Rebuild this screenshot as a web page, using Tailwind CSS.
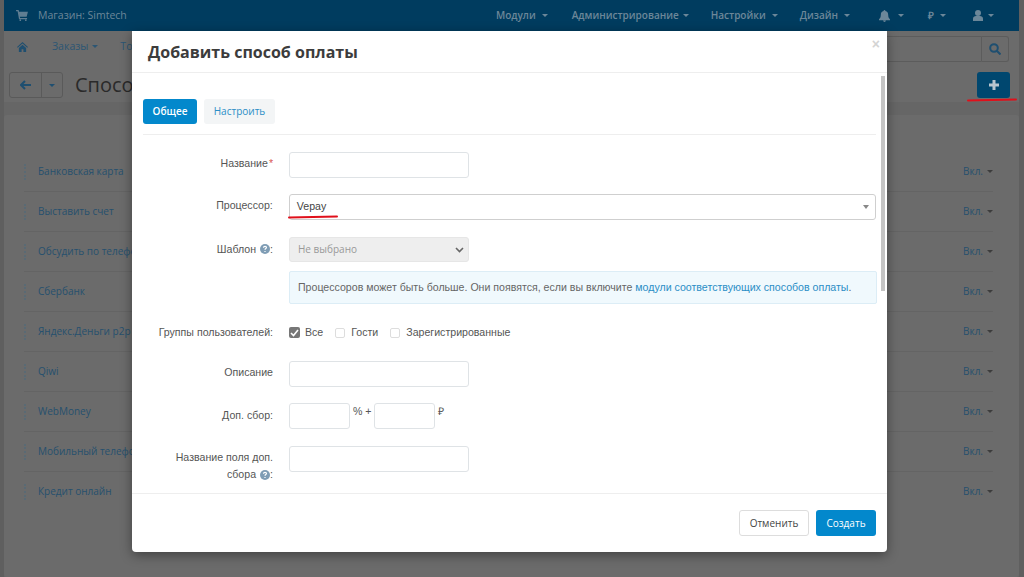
<!DOCTYPE html>
<html lang="ru">
<head>
<meta charset="utf-8">
<script src="https://cdn.jsdelivr.net/npm/@tailwindcss/browser@4"></script>
<title>Способы оплаты</title>
</head>
<body class="relative w-[1024px] h-[577px] overflow-hidden bg-[#5f5f5f] font-['Open_Sans',sans-serif] text-[11px]">
<div class="flex flex-col h-full ml-[4px] mr-[5px] bg-[#666666]">
  <header class="h-[31px] bg-[#003c5f] flex items-center pl-[12px] text-[#6c8799]">
    <svg class="w-[12px] h-[11px] mr-[10px]" viewBox="0 0 14 13" fill="#5f7d92"><path d="M0 0h3l.5 2H14l-1.500 6H4.500l.3 1.500H13V11H3.500L1.800 1.500H0z"/><circle cx="5" cy="12" r="1"/><circle cx="11.500" cy="12" r="1"/></svg>
    <span class="text-[10.500px]">Магазин: Simtech</span>
    <nav class="ml-auto flex items-center font-semibold text-[10px] text-[#6c8799]">
      <span class="flex items-center gap-[6px] mr-[24px]">Модули<i class="w-0 h-0 border-x-[3px] border-x-transparent border-t-[3px] border-t-[#6c8799]"></i></span>
      <span class="flex items-center gap-[4px] mr-[22px]">Администрирование<i class="w-0 h-0 border-x-[3px] border-x-transparent border-t-[3px] border-t-[#6c8799]"></i></span>
      <span class="flex items-center gap-[6px] mr-[22px]">Настройки<i class="w-0 h-0 border-x-[3px] border-x-transparent border-t-[3px] border-t-[#6c8799]"></i></span>
      <span class="flex items-center gap-[6px] mr-[29px]">Дизайн<i class="w-0 h-0 border-x-[3px] border-x-transparent border-t-[3px] border-t-[#6c8799]"></i></span>
      <span class="flex items-center gap-[8px] mr-[24px]"><svg class="w-[11px] h-[12px]" viewBox="0 0 12 13" fill="#6c8799"><path d="M6 0c.6 0 1 .4 1 1 2 .4 3 2 3 4 0 3 1 4 2 5v1H0v-1c1-1 2-2 2-5 0-2 1-3.600 3-4 0-.6.400-1 1-1zM4.500 11.500h3C7.500 12.500 6.800 13 6 13s-1.500-.5-1.500-1.500z"/></svg><i class="w-0 h-0 border-x-[3px] border-x-transparent border-t-[3px] border-t-[#6c8799]"></i></span>
      <span class="flex items-center gap-[6px] mr-[27px]">₽<i class="w-0 h-0 border-x-[3px] border-x-transparent border-t-[3px] border-t-[#6c8799]"></i></span>
      <span class="flex items-center gap-[5px] mr-[25px]"><svg class="w-[10px] h-[11px]" viewBox="0 0 10 11" fill="#6c8799"><circle cx="5" cy="3" r="3"/><path d="M0 11V8.500C0 7 1.500 6 3 6h4c1.500 0 3 1 3 2.500V11z"/></svg><i class="w-0 h-0 border-x-[3px] border-x-transparent border-t-[3px] border-t-[#6c8799]"></i></span>
    </nav>
  </header>
  <div class="h-[31px] flex items-center pl-[13px] pr-[10px] bg-[#6b6b6b] text-[#2c5674] text-[10.500px]">
    <svg class="w-[11px] h-[10px] mr-[24px]" viewBox="0 0 12 11" fill="#1f4f70"><path d="M6 0l6 5.500-.8.800L6 1.700.8 6.300 0 5.500zM2 6.500L6 3l4 3.500V11H7V8H5v3H2z"/></svg>
    <span class="flex items-center gap-[4px] mr-[22px]">Заказы<i class="w-0 h-0 border-x-[3px] border-x-transparent border-t-[3px] border-t-[#2c5674]"></i></span>
    <span>Товары</span>
    <div class="ml-auto flex h-[26px] w-[200px] mt-[5px] justify-end">
      <div class="flex-1 border border-[#5c5c5c] rounded-l-[3px]"></div>
      <div class="w-[27px] border border-l-0 border-[#5c5c5c] rounded-r-[3px] flex items-center justify-center">
        <svg class="w-[12px] h-[12px]" viewBox="0 0 12 12" fill="none" stroke="#1f4f70" stroke-width="2"><circle cx="5" cy="5" r="3.800"/><path d="M8 8l3.500 3.500"/></svg>
      </div>
    </div>
  </div>
  <div class="h-[40px] flex items-start pl-[5px] pr-[9px] pt-[10px] bg-[#6b6b6b]">
    <div class="flex h-[26px] border border-[#5a5a5a] rounded-[3px]">
      <div class="w-[32px] flex items-center justify-center border-r border-[#5a5a5a]">
        <svg class="w-[11px] h-[10px]" viewBox="0 0 11 10" fill="none" stroke="#1f4f70" stroke-width="2"><path d="M5 1L1 5l4 4M1.500 5H11"/></svg>
      </div>
      <div class="w-[20px] flex items-center justify-center"><i class="w-0 h-0 border-x-[3px] border-x-transparent border-t-[3px] border-t-[#1f4f70]"></i></div>
    </div>
    <span class="ml-[12px] text-[20px] leading-[26px] text-[#2a2a2a]">Способы оплаты</span>
    <div class="ml-auto w-[33px] h-[26px] bg-[#00476f] rounded-[3px] flex items-center justify-center">
      <svg class="w-[10px] h-[10px]" viewBox="0 0 10 10" fill="#b9c6cf"><path d="M3.500 0h3v3.500H10v3H6.500V10h-3V6.500H0v-3h3.500z"/></svg>
    </div>
  </div>
  <div class="h-[13px]"></div>
  <main class="flex-1 bg-[#6b6b6b] pt-[37px] pl-[20px] pr-[26px] rounded-[3px] text-[#26506e] text-[10px]">
    <div class="h-[40px] flex items-center justify-between border-b border-[#646464]"><span class="flex items-center gap-[8px]"><i class="w-[6px] h-[16px] border-l-2 border-dotted border-[#5a6a74]"></i>Банковская карта</span><span class="flex items-center gap-[4px]">Вкл.<i class="w-0 h-0 border-x-[3px] border-x-transparent border-t-[3px] border-t-[#3c3c3c]"></i></span></div>
    <div class="h-[40px] flex items-center justify-between border-b border-[#646464]"><span class="flex items-center gap-[8px]"><i class="w-[6px] h-[16px] border-l-2 border-dotted border-[#5a6a74]"></i>Выставить счет</span><span class="flex items-center gap-[4px]">Вкл.<i class="w-0 h-0 border-x-[3px] border-x-transparent border-t-[3px] border-t-[#3c3c3c]"></i></span></div>
    <div class="h-[40px] flex items-center justify-between border-b border-[#646464]"><span class="flex items-center gap-[8px]"><i class="w-[6px] h-[16px] border-l-2 border-dotted border-[#5a6a74]"></i>Обсудить по телефону</span><span class="flex items-center gap-[4px]">Вкл.<i class="w-0 h-0 border-x-[3px] border-x-transparent border-t-[3px] border-t-[#3c3c3c]"></i></span></div>
    <div class="h-[40px] flex items-center justify-between border-b border-[#646464]"><span class="flex items-center gap-[8px]"><i class="w-[6px] h-[16px] border-l-2 border-dotted border-[#5a6a74]"></i>Сбербанк</span><span class="flex items-center gap-[4px]">Вкл.<i class="w-0 h-0 border-x-[3px] border-x-transparent border-t-[3px] border-t-[#3c3c3c]"></i></span></div>
    <div class="h-[40px] flex items-center justify-between border-b border-[#646464]"><span class="flex items-center gap-[8px]"><i class="w-[6px] h-[16px] border-l-2 border-dotted border-[#5a6a74]"></i>Яндекс.Деньги p2p</span><span class="flex items-center gap-[4px]">Вкл.<i class="w-0 h-0 border-x-[3px] border-x-transparent border-t-[3px] border-t-[#3c3c3c]"></i></span></div>
    <div class="h-[40px] flex items-center justify-between border-b border-[#646464]"><span class="flex items-center gap-[8px]"><i class="w-[6px] h-[16px] border-l-2 border-dotted border-[#5a6a74]"></i>Qiwi</span><span class="flex items-center gap-[4px]">Вкл.<i class="w-0 h-0 border-x-[3px] border-x-transparent border-t-[3px] border-t-[#3c3c3c]"></i></span></div>
    <div class="h-[40px] flex items-center justify-between border-b border-[#646464]"><span class="flex items-center gap-[8px]"><i class="w-[6px] h-[16px] border-l-2 border-dotted border-[#5a6a74]"></i>WebMoney</span><span class="flex items-center gap-[4px]">Вкл.<i class="w-0 h-0 border-x-[3px] border-x-transparent border-t-[3px] border-t-[#3c3c3c]"></i></span></div>
    <div class="h-[40px] flex items-center justify-between border-b border-[#646464]"><span class="flex items-center gap-[8px]"><i class="w-[6px] h-[16px] border-l-2 border-dotted border-[#5a6a74]"></i>Мобильный телефон</span><span class="flex items-center gap-[4px]">Вкл.<i class="w-0 h-0 border-x-[3px] border-x-transparent border-t-[3px] border-t-[#3c3c3c]"></i></span></div>
    <div class="h-[40px] flex items-center justify-between border-b border-transparent"><span class="flex items-center gap-[8px]"><i class="w-[6px] h-[16px] border-l-2 border-dotted border-[#5a6a74]"></i>Кредит онлайн</span><span class="flex items-center gap-[4px]">Вкл.<i class="w-0 h-0 border-x-[3px] border-x-transparent border-t-[3px] border-t-[#3c3c3c]"></i></span></div>
  </main>
</div>

<section class="absolute left-[132px] top-[31px] w-[755px] h-[521px] bg-white rounded-b-[4px] shadow-[0_3px_12px_rgba(0,0,0,0.4)] flex flex-col text-[#555] font-['Liberation_Sans',sans-serif] text-[10.600px]">
  <div class="h-[42px] shrink-0 border-b border-[#eeeeee] flex items-start justify-between pl-[16px] pr-[7px]">
    <h1 class="mt-[10px] text-[16px] leading-[22px] font-bold text-[#3c3c3c] font-['Open_Sans',sans-serif]">Добавить способ оплаты</h1>
    <span class="mt-[6px] text-[14px] leading-[14px] font-bold text-[#d4d4d4]">×</span>
  </div>
  <div class="relative h-[420px] shrink-0 overflow-hidden pl-[11px] pr-[11px] pt-[26px]">
    <div class="absolute right-[2px] top-[3px] w-[4px] h-[215px] bg-[#c4c4c4]"></div>
    <div class="flex gap-[7px] h-[25px] text-[10px] font-['Open_Sans',sans-serif]">
      <span class="w-[54px] rounded-[3px] bg-[#0388cc] text-white font-semibold flex items-center justify-center">Общее</span>
      <span class="w-[71px] rounded-[3px] bg-[#f3f5f6] text-[#2b8ec6] flex items-center justify-center">Настроить</span>
    </div>
    <div class="mt-[10px] border-t border-[#eeeeee]"></div>
    <div class="mt-[17px] flex h-[26px]">
      <label class="w-[130px] text-right mt-[4px] leading-[14px]">Название<span class="ml-[1px] text-[#d9534f]">*</span></label>
      <div class="ml-[16px] w-[180px] border border-[#dfe3e6] rounded-[3px]"></div>
    </div>
    <div class="mt-[16px] flex h-[26px]">
      <label class="w-[130px] text-right mt-[4px] leading-[14px]">Процессор:</label>
      <div class="relative ml-[16px] w-[588px] border border-[#cfcfcf] rounded-[3px] flex items-center pl-[7px] text-[#444]">Vepay<i class="ml-auto mr-[6px] w-0 h-0 border-x-[3px] border-x-transparent border-t-[4px] border-t-[#888]"></i>
        <div class="absolute left-[-2px] top-[21px] w-[50px] h-[2px] bg-[#e0101b] rounded-full -rotate-1"></div>
      </div>
    </div>
    <div class="mt-[17px] flex h-[25px]">
      <label class="w-[130px] text-right leading-[14px] flex justify-end items-center h-[24px]"><span>Шаблон</span><svg class="ml-[4px] w-[10px] h-[10px]" viewBox="0 0 10 10"><circle cx="5" cy="5" r="5" fill="#7f9db5"/><path d="M3.500 3.800C3.500 2.800 4.200 2.300 5 2.300s1.500.5 1.500 1.300c0 1-1.500 1-1.500 2.200M5 7v1" stroke="#fff" stroke-width="1.200" fill="none"/></svg><span>:</span></label>
      <div class="ml-[16px] w-[180px] bg-[#eeeeee] border border-[#e6e6e6] rounded-[3px] flex items-center pl-[8px] text-[10px] text-[#999] font-['Open_Sans',sans-serif]">Не выбрано
        <svg class="ml-auto mr-[4px] w-[9px] h-[6px]" viewBox="0 0 9 6" fill="none" stroke="#666" stroke-width="1.600"><path d="M1 1l3.500 3.500L8 1"/></svg>
      </div>
    </div>
    <div class="mt-[9px] ml-[146px] w-[588px] h-[33px] bg-[#f0f9fd] border border-[#dcedf6] rounded-[2px] flex items-center pl-[8px] text-[#666]">Процессоров может быть больше. Они появятся, если вы включите&nbsp;<span class="text-[#2b8ec6]">модули соответствующих способов оплаты</span>.</div>
    <div class="mt-[20px] flex h-[18px] items-center">
      <label class="w-[130px] text-right">Группы пользователей:</label>
      <div class="ml-[16px] flex items-center">
        <span class="w-[11px] h-[11px] rounded-[2px] bg-[#777] flex items-center justify-center"><svg class="w-[9px] h-[8px]" viewBox="0 0 9 8" fill="none" stroke="#fff" stroke-width="1.600"><path d="M1 4l2.500 2.500L8 1"/></svg></span>
        <span class="ml-[5px]">Все</span>
        <span class="ml-[12px] w-[10px] h-[10px] rounded-[2px] border border-[#dddddd]"></span>
        <span class="ml-[6px]">Гости</span>
        <span class="ml-[12px] w-[10px] h-[10px] rounded-[2px] border border-[#dddddd]"></span>
        <span class="ml-[6px]">Зарегистрированные</span>
      </div>
    </div>
    <div class="mt-[19px] flex h-[26px]">
      <label class="w-[130px] text-right mt-[4px] leading-[14px]">Описание</label>
      <div class="ml-[16px] w-[180px] border border-[#dfe3e6] rounded-[3px]"></div>
    </div>
    <div class="mt-[16px] flex h-[26px]">
      <label class="w-[130px] text-right mt-[5px] leading-[14px]">Доп. сбор:</label>
      <div class="ml-[16px] w-[61px] border border-[#dfe3e6] rounded-[3px]"></div>
      <span class="ml-[3px] mt-[1px] w-[21px] leading-[14px]">% +</span>
      <div class="w-[61px] border border-[#dfe3e6] rounded-[3px]"></div>
      <span class="ml-[3px] mt-[1px] leading-[14px]">₽</span>
    </div>
    <div class="mt-[17px] flex">
      <label class="w-[130px] text-right mt-[3px] leading-[17px] pl-[16px]">Название поля доп. сбора<svg class="inline ml-[4px] w-[10px] h-[10px]" viewBox="0 0 10 10"><circle cx="5" cy="5" r="5" fill="#7f9db5"/><path d="M3.500 3.800C3.500 2.800 4.200 2.300 5 2.300s1.500.5 1.500 1.300c0 1-1.500 1-1.500 2.200M5 7v1" stroke="#fff" stroke-width="1.200" fill="none"/></svg>:</label>
      <div class="ml-[16px] w-[180px] h-[26px] border border-[#dfe3e6] rounded-[3px]"></div>
    </div>
  </div>
  <div class="flex-1 border-t border-[#eeeeee] flex items-start justify-end gap-[7px] pr-[11px] pt-[16px] text-[10px] font-['Open_Sans',sans-serif]">
    <button class="w-[70px] h-[26px] border border-[#dddddd] rounded-[3px] text-[#444]">Отменить</button>
    <button class="w-[60px] h-[26px] bg-[#0388cc] rounded-[3px] text-white">Создать</button>
  </div>
</section>
<div class="absolute left-[967px] top-[99px] w-[50px] h-[2px] bg-[#e0101b] rounded-full -rotate-1"></div>
</body>
</html>
